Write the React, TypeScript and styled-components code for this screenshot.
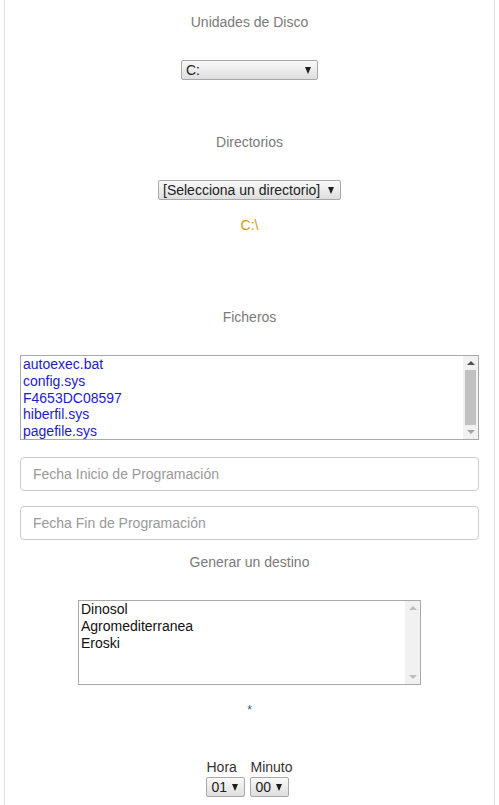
import React from "react";
import styled, { createGlobalStyle } from "styled-components";

const Global = createGlobalStyle`
  html, body { margin: 0; padding: 0; background: #fff; }
  body { font-family: "Liberation Sans", Arial, sans-serif; font-size: 14px; color: #333; }
  * { box-sizing: border-box; }
`;

const Page = styled.div`
  margin: 0 4px;
  min-height: 805px;
  border-left: 1px solid #dedede;
  border-right: 1px solid #dedede;
  padding: 0 15px;
  display: flex;
  flex-direction: column;
  align-items: center;
`;

const Title = styled.div<{ $mt: number }>`
  margin-top: ${(p) => p.$mt}px;
  height: 20px;
  line-height: 20px;
  font-size: 14px;
  color: #7a7a7a;
  text-align: center;
`;

const Path = styled.div<{ $mt: number }>`
  margin-top: ${(p) => p.$mt}px;
  height: 20px;
  line-height: 20px;
  font-size: 14px;
  color: #cc9a06;
`;

const Star = styled.div<{ $mt: number }>`
  margin-top: ${(p) => p.$mt}px;
  height: 20px;
  line-height: 20px;
  font-size: 12px;
  color: #2b5f8a;
`;

const SelectBox = styled.div<{ $mt?: number; $w: number }>`
  margin-top: ${(p) => p.$mt ?? 0}px;
  width: ${(p) => p.$w}px;
  height: 20px;
  border: 1px solid #a8a8a8;
  border-radius: 2px;
  background: linear-gradient(#fafafa, #dedede);
  display: flex;
  align-items: center;
  justify-content: space-between;
  padding: 0 6px 0 4px;
  font-size: 14px;
  line-height: 18px;
  color: #222;
  white-space: nowrap;
`;

const Arrow = styled.span`
  flex: none;
  width: 0;
  height: 0;
  border-left: 3.5px solid transparent;
  border-right: 3.5px solid transparent;
  border-top: 7px solid #1e1e1e;
  margin-left: 4px;
`;

const ListBox = styled.div<{ $mt: number; $w?: number }>`
  margin-top: ${(p) => p.$mt}px;
  width: ${(p) => (p.$w ? `${p.$w}px` : "100%")};
  height: 85px;
  border: 1px solid #a9a9a9;
  display: flex;
  background: #fff;
`;

const Items = styled.div`
  flex: 1;
  overflow: hidden;
  padding: 0 2px;
`;

const Item = styled.div<{ $color: string }>`
  font-size: 14px;
  line-height: 16.8px;
  color: ${(p) => p.$color};
  white-space: nowrap;
`;

const ScrollBar = styled.div`
  width: 15px;
  flex: none;
  background: #f1f1f1;
  display: flex;
  flex-direction: column;
  align-items: center;
`;

const ScrollBtn = styled.div<{ $down?: boolean; $disabled?: boolean }>`
  height: 14px;
  width: 15px;
  display: flex;
  align-items: center;
  justify-content: center;
  &::after {
    content: "";
    width: 0;
    height: 0;
    border-left: 4px solid transparent;
    border-right: 4px solid transparent;
    ${(p) =>
      p.$down
        ? `border-top: 4px solid ${p.$disabled ? "#bdbdbd" : "#a3a3a3"};`
        : `border-bottom: 4px solid ${p.$disabled ? "#bdbdbd" : "#505050"};`}
  }
`;

const Track = styled.div`
  flex: 1;
  width: 100%;
  display: flex;
  justify-content: center;
`;

const Thumb = styled.div`
  width: 11px;
  height: 100%;
  background: #c1c1c1;
`;

const Input = styled.input<{ $mt: number }>`
  margin-top: ${(p) => p.$mt}px;
  width: 100%;
  height: 34px;
  border: 1px solid #ccc;
  border-radius: 4px;
  padding: 6px 12px;
  font-family: "Liberation Sans", Arial, sans-serif;
  font-size: 14px;
  color: #555;
  outline: none;
  &::placeholder { color: #999; }
`;

const TimeRow = styled.div<{ $mt: number }>`
  margin-top: ${(p) => p.$mt}px;
  display: flex;
  gap: 5px;
`;

const TimeCol = styled.div`
  display: flex;
  flex-direction: column;
  align-items: flex-start;
`;

const TimeLabel = styled.div`
  height: 20px;
  line-height: 20px;
  font-size: 14px;
  color: #333;
`;

type LB = { items: string[]; color: string; thumb: boolean };

function List({ items, color, thumb, mt, w }: LB & { mt: number; w?: number }) {
  return (
    <ListBox $mt={mt} $w={w}>
      <Items>
        {items.map((i) => (
          <Item key={i} $color={color}>
            {i}
          </Item>
        ))}
      </Items>
      <ScrollBar>
        <ScrollBtn $disabled={!thumb} />
        <Track>{thumb && <Thumb />}</Track>
        <ScrollBtn $down $disabled={!thumb} />
      </ScrollBar>
    </ListBox>
  );
}

export default function App() {
  return (
    <>
      <Global />
      <Page>
        <Title $mt={12}>Unidades de Disco</Title>
        <SelectBox $mt={28} $w={137}>
          <span>C:</span>
          <Arrow />
        </SelectBox>
        <Title $mt={52}>Directorios</Title>
        <SelectBox $mt={28} $w={183}>
          <span>[Selecciona un directorio]</span>
          <Arrow />
        </SelectBox>
        <Path $mt={15}>C:\</Path>
        <Title $mt={72}>Ficheros</Title>
        <List
          mt={28}
          color="#1c1cc8"
          thumb
          items={["autoexec.bat", "config.sys", "F4653DC08597", "hiberfil.sys", "pagefile.sys"]}
        />
        <Input $mt={17} placeholder="Fecha Inicio de Programación" />
        <Input $mt={15} placeholder="Fecha Fin de Programación" />
        <Title $mt={12}>Generar un destino</Title>
        <List
          mt={28}
          w={343}
          color="#111"
          thumb={false}
          items={["Dinosol", "Agromediterranea", "Eroski"]}
        />
        <Star $mt={15}>*</Star>
        <TimeRow $mt={37}>
          <TimeCol>
            <TimeLabel>Hora</TimeLabel>
            <SelectBox $w={39}>
              <span>01</span>
              <Arrow />
            </SelectBox>
          </TimeCol>
          <TimeCol>
            <TimeLabel>Minuto</TimeLabel>
            <SelectBox $w={39}>
              <span>00</span>
              <Arrow />
            </SelectBox>
          </TimeCol>
        </TimeRow>
      </Page>
    </>
  );
}
